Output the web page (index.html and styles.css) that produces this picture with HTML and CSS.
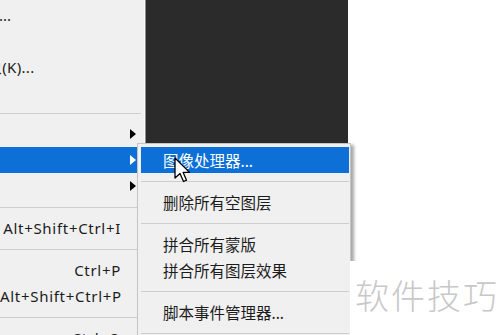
FILE: index.html
```html
<!DOCTYPE html>
<html lang="zh-CN">
<head>
  <meta charset="UTF-8">
  <title>文件菜单 - 脚本</title>
  <link rel="stylesheet" href="styles.css">
</head>
<body>
  <div class="screen">
    <div class="menu">
      <div class="item"><span class="label cut-full">象...</span></div>
      <div class="item"></div>
      <div class="item"><span class="label cut-part">象(K)...</span></div>
      <div class="item"></div>
      <div class="sep"></div>
      <div class="item"><span class="label"></span><span class="arrow"></span></div>
      <div class="item active"><span class="label"></span><span class="arrow"></span></div>
      <div class="item"><span class="label"></span><span class="arrow"></span></div>
      <div class="sep"></div>
      <div class="item"><span class="label"></span><span class="shortcut">Alt+Shift+Ctrl+I</span></div>
      <div class="sep"></div>
      <div class="item"><span class="label"></span><span class="shortcut">Ctrl+P</span></div>
      <div class="item"><span class="label"></span><span class="shortcut">Alt+Shift+Ctrl+P</span></div>
      <div class="sep"></div>
      <div class="item"><span class="label"></span><span class="shortcut">Ctrl+Q</span></div>
    </div>
    <div class="canvas"></div>
    <div class="blank"></div>

    <!-- 子菜单：脚本 -->
    <div class="submenu">
      <div class="sub-item active">图像处理器...</div>
      <div class="sep"></div>
      <div class="sub-item">删除所有空图层</div>
      <div class="sep"></div>
      <div class="sub-item">拼合所有蒙版</div>
      <div class="sub-item">拼合所有图层效果</div>
      <div class="sep"></div>
      <div class="sub-item">脚本事件管理器...</div>
      <div class="sep"></div>
      <div class="sub-item">将文件载入堆栈...</div>
    </div>

    <svg class="cursor" width="20" height="28" viewBox="0 0 20 28">
      <path d="M1 1 L1 21 L6 16.5 L9.5 24.5 L12.5 23.2 L9.2 15.4 L15.5 15.4 Z" fill="#fff" stroke="#000" stroke-width="1.3" stroke-linejoin="round"/>
    </svg>

    <div class="watermark">软件技巧</div>
  </div>
</body>
</html>
```

FILE: styles.css
```css
body {
  margin: 0;
  background-color: #fff;
}
.screen {
  position: relative;
  display: flex;
  width: 500px;
  height: 335px;
  overflow: hidden;
  font-family: "Noto Sans", "Noto Sans CJK SC", sans-serif;
  font-size: 15px;
  color: #1c1c1c;
}
.menu {
  flex: none;
  width: 144px;
  padding-top: 1px;
  background-color: #f0f0f0;
  border-right: 1px solid #fbfbfb;
}
.item {
  display: flex;
  align-items: center;
  height: 26px;
  white-space: nowrap;
}
.item .label {
  flex: 1;
}
.cut-full {
  margin-left: -16px;
}
.cut-part {
  margin-left: -13px;
  letter-spacing: 0.3px;
}
.item.active {
  background-color: #0c70d6;
}
.shortcut {
  margin-right: 23px;
  letter-spacing: 0.7px;
}
.arrow {
  width: 0;
  height: 0;
  margin-right: 8px;
  border-top: 5px solid transparent;
  border-bottom: 5px solid transparent;
  border-left: 6px solid #000;
}
.item.active .arrow {
  border-left-color: #fff;
}
.sep {
  height: 1px;
  margin: 8px 3px 7px 0;
  background-color: #cdcdcd;
}
.canvas {
  flex: none;
  width: 202px;
  background-color: #2b2b2b;
  border-left: 1px solid #8c8c8c;
}
.blank {
  flex: 1;
  background-color: #fff;
}
.submenu {
  position: absolute;
  left: 137px;
  top: 143px;
  width: 208px;
  padding: 3px 1px 3px 3px;
  background-color: #f0f0f0;
  border: 1px solid #c4c4c4;
  box-shadow: 3px 2px 3px rgba(0, 0, 0, 0.35);
}
.submenu .sep {
  margin: 8px 0 7px 0;
}
.sub-item {
  display: flex;
  align-items: center;
  height: 26px;
  padding-left: 22px;
  font-size: 15.5px;
  white-space: nowrap;
}
.sub-item.active {
  background-color: #0c70d6;
  color: #fff;
}
.cursor {
  position: absolute;
  left: 174px;
  top: 157px;
}
.watermark {
  position: absolute;
  left: 350px;
  top: 261px;
  right: 0;
  bottom: 0;
  padding: 14px 0 0 5px;
  background-color: #fff;
  font-family: "Noto Sans CJK SC", sans-serif;
  font-size: 34px;
  font-weight: 300;
  line-height: 40px;
  letter-spacing: 2px;
  color: #c8c8c8;
}
```
